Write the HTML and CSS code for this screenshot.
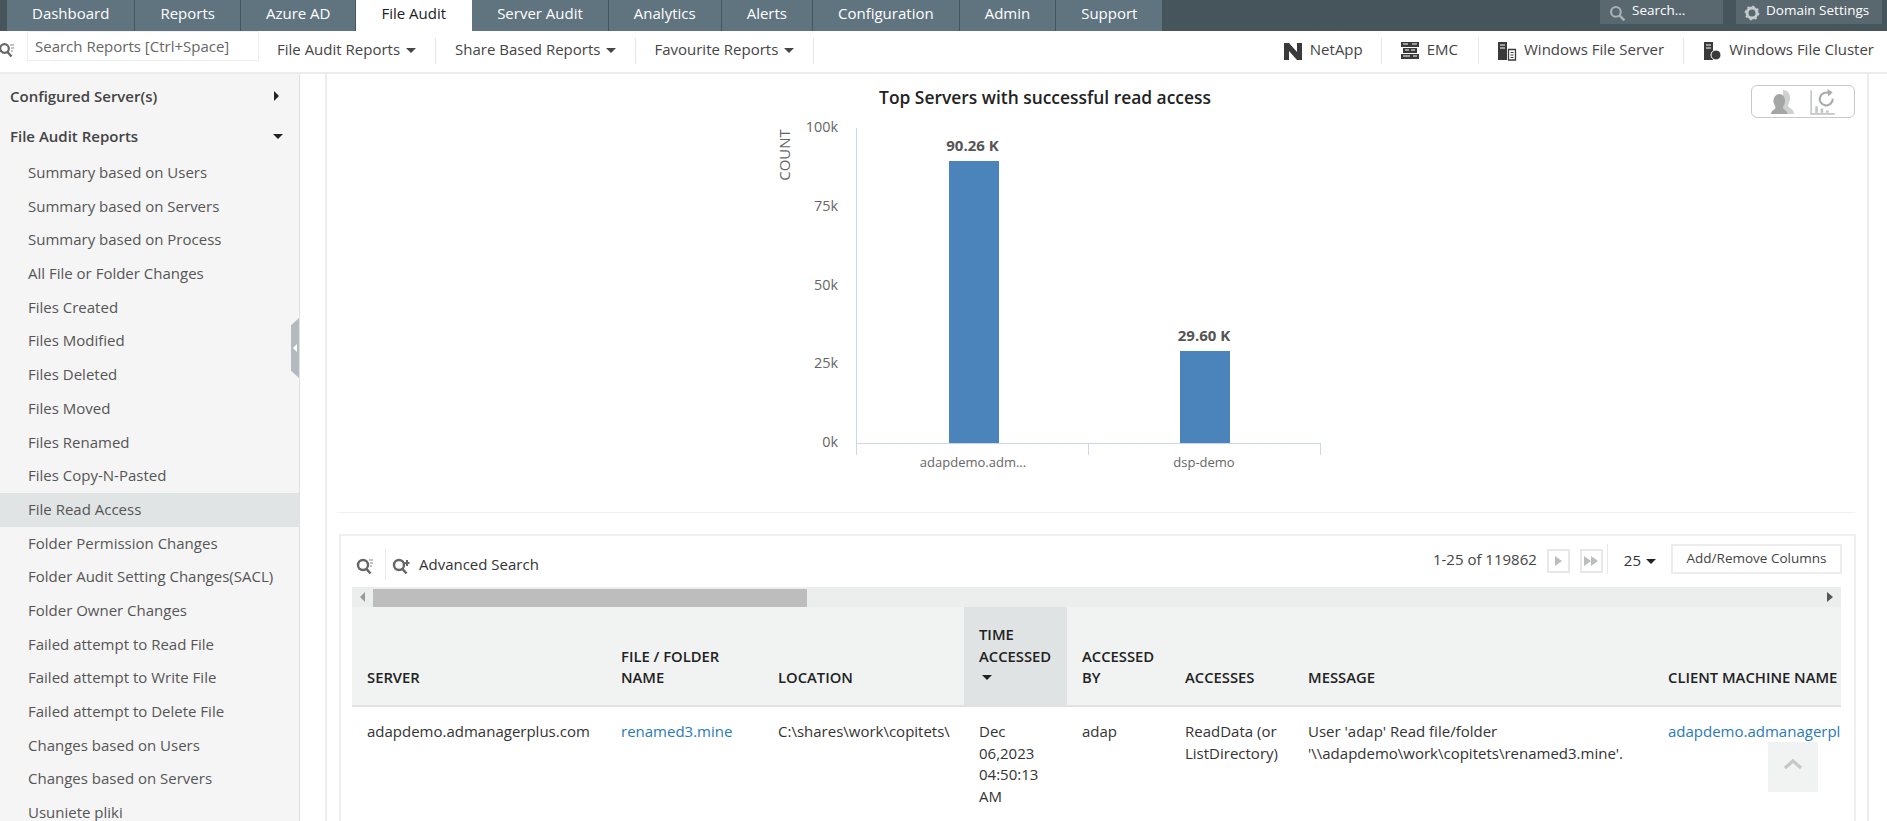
FILE: index.html
```html
<!DOCTYPE html>
<html lang="en">
<head>
<meta charset="utf-8">
<title>File Audit</title>
<link rel="stylesheet" href="styles.css">
</head>
<body>
<header class="topbar">
  <nav class="tabs">
    <a class="tab">Dashboard</a><a class="tab">Reports</a><a class="tab">Azure AD</a><a class="tab active">File Audit</a><a class="tab">Server Audit</a><a class="tab">Analytics</a><a class="tab">Alerts</a><a class="tab">Configuration</a><a class="tab">Admin</a><a class="tab">Support</a>
  </nav>
  <div class="top-tools">
    <div class="top-search">
      <svg class="top-icon" viewBox="0 0 16 16"><circle cx="6.500" cy="6.500" r="4.600" fill="none" stroke="#a9b1b5" stroke-width="2"/><path d="M10 10l4.500 4.500" stroke="#a9b1b5" stroke-width="2.400"/></svg>
      <span>Search...</span>
    </div>
    <div class="top-domain">
      <svg class="top-icon" viewBox="0 0 16 16"><circle cx="8" cy="8" r="5" fill="none" stroke="#c4c9cc" stroke-width="3"/><circle cx="8" cy="8" r="6.600" fill="none" stroke="#c4c9cc" stroke-width="1.600" stroke-dasharray="2.200 3"/></svg>
      <span>Domain Settings</span>
    </div>
  </div>
</header>

<div class="toolbar">
  <svg class="tool-search" viewBox="0 0 16 16"><circle cx="5.500" cy="6.500" r="4.300" fill="none" stroke="#666" stroke-width="2.200"/><path d="M8.500 10l4 4.500" stroke="#666" stroke-width="2.400"/><path d="M11 3h4M12 6h3M12 9h2" stroke="#888" stroke-width="1"/></svg>
  <div class="search-box">Search Reports [Ctrl+Space]</div>
  <div class="menu m1">File Audit Reports<i class="caret"></i></div>
  <div class="menu m2">Share Based Reports<i class="caret"></i></div>
  <div class="menu m3">Favourite Reports<i class="caret"></i></div>
  <div class="spacer"></div>
  <div class="kind k1">
    <svg class="kind-icon" viewBox="0 0 20 20"><path d="M1 2h5l8 9V2h5v17h-5L6 10v9H1z" fill="#3a3a3a"/></svg>NetApp
  </div>
  <div class="kind k2">
    <svg class="kind-icon" viewBox="0 0 20 20"><path d="M1 1h18v5H1zM3 7h14v5H3zM1 13h18v5H1z" fill="#3a3a3a"/><path d="M3 3h5M12 3h5M5 9h4M11 9h4M3 15h7M13 15h4" stroke="#fff" stroke-width="1.200"/></svg>EMC
  </div>
  <div class="kind k3">
    <svg class="kind-icon" viewBox="0 0 20 20"><path d="M1 1h9v18H1z" fill="#3a3a3a"/><path d="M3 4h5M3 7h5" stroke="#fff" stroke-width="1.200"/><path d="M11.500 8.500h7v10.500h-7z" fill="#fff" stroke="#3a3a3a" stroke-width="1.300"/><path d="M13.500 11.500h3M13.500 14h3M13.500 16.500h3" stroke="#3a3a3a"/></svg>Windows File Server
  </div>
  <div class="kind k4">
    <svg class="kind-icon" viewBox="0 0 20 20"><path d="M2 1h9v18H2z" fill="#3a3a3a"/><path d="M4 4h5M4 7h5" stroke="#fff" stroke-width="1.200"/><circle cx="14" cy="14" r="5" fill="#3a3a3a" stroke="#fff"/></svg>Windows File Cluster
  </div>
</div>

<div class="layout">
  <aside class="sidebar">
    <div class="side-head first">Configured Server(s)<i class="tri-right"></i></div>
    <div class="side-head">File Audit Reports<i class="tri-down"></i></div>
    <ul class="side-list">
      <li>Summary based on Users</li>
      <li>Summary based on Servers</li>
      <li>Summary based on Process</li>
      <li>All File or Folder Changes</li>
      <li>Files Created</li>
      <li>Files Modified</li>
      <li>Files Deleted</li>
      <li>Files Moved</li>
      <li>Files Renamed</li>
      <li>Files Copy-N-Pasted</li>
      <li class="current">File Read Access</li>
      <li>Folder Permission Changes</li>
      <li>Folder Audit Setting Changes(SACL)</li>
      <li>Folder Owner Changes</li>
      <li>Failed attempt to Read File</li>
      <li>Failed attempt to Write File</li>
      <li>Failed attempt to Delete File</li>
      <li>Changes based on Users</li>
      <li>Changes based on Servers</li>
      <li>Usuniete pliki</li>
    </ul>
    <div class="side-handle"><i></i></div>
  </aside>

  <main class="main">
    <section class="chart">
      <svg class="chart-svg" viewBox="337 74 1518 438">
        <text class="c-title" x="1045" y="104" text-anchor="middle">Top Servers with successful read access</text>
        <text class="c-axis-title" transform="translate(790 155) rotate(-90)" text-anchor="middle">COUNT</text>
        <g class="c-tick" text-anchor="end">
          <text x="838" y="132">100k</text>
          <text x="838" y="211">75k</text>
          <text x="838" y="290">50k</text>
          <text x="838" y="368">25k</text>
          <text x="838" y="447">0k</text>
        </g>
        <path d="M856.500 128V455M856 443.500H1321M1088.500 443V455M1320.500 443V455" stroke="#ccd6eb" stroke-width="1" fill="none"/>
        <rect x="949" y="161" width="50" height="282" fill="#4b83bb"/>
        <rect x="1180" y="351" width="50" height="92" fill="#4b83bb"/>
        <text class="c-data" x="972.500" y="151" text-anchor="middle">90.26 K</text>
        <text class="c-data" x="1204" y="341" text-anchor="middle">29.60 K</text>
        <text class="c-cat" x="973" y="467" text-anchor="middle">adapdemo.adm...</text>
        <text class="c-cat" x="1204" y="467" text-anchor="middle">dsp-demo</text>
      </svg>
      <div class="chart-btns">
        <svg class="cb-users" viewBox="0 0 26 26"><path d="M13 1c4.500 0 7.500 3.500 7 9-.3 3-2 5-2 6.500 0 2.500 6 3 6 8.500H13V1z" fill="#cfd1d1"/><path d="M9.500 5c3.500 0 6 3.500 5.500 8-.3 2.500-2 4.500-2 5.500 0 2.500 4.500 2.500 4.500 6.500H1c0-4 4.500-4 4.500-6.500 0-1-1.500-3-2-5.500C3 8.500 6 5 9.500 5z" fill="#a4a6a6"/></svg>
        <svg class="cb-chart" viewBox="0 0 26 26"><path d="M2 2v22h22" fill="none" stroke="#c4c6c6" stroke-width="1.500"/><path d="M7 23v-6M12 23v-4M17 23v-2" stroke="#c4c6c6" stroke-width="2.500"/><path d="M22 10a6 6 0 1 1-3-5" fill="none" stroke="#a9abab" stroke-width="2"/><path d="M17 1l5 3-4 4z" fill="#a9abab"/></svg>
      </div>
    </section>

    <section class="report">
      <div class="report-bar">
        <svg class="rb-icon" viewBox="0 0 18 18"><circle cx="7" cy="8" r="5" fill="none" stroke="#666" stroke-width="2.400"/><path d="M10.500 12l4 4.500" stroke="#666" stroke-width="2.600"/><path d="M13 3h4M14 6h3M14 9h2" stroke="#888" stroke-width="1"/></svg>
        <span class="rb-sep"></span>
        <svg class="rb-icon" viewBox="0 0 18 18"><circle cx="7" cy="8" r="5" fill="none" stroke="#666" stroke-width="2.400"/><path d="M10.500 12l4 4.500" stroke="#666" stroke-width="2.600"/><path d="M15 3v6M12.500 6h5" stroke="#666" stroke-width="2"/></svg>
        <span class="adv">Advanced Search</span>
        <span class="spacer"></span>
        <span class="range">1-25 of 119862</span>
        <span class="pg"><i class="pg-tri"></i></span>
        <span class="pg pg2"><i class="pg-tri"></i><i class="pg-tri"></i></span>
        <span class="rb-sep r"></span>
        <span class="size">25<i class="caret dark"></i></span>
        <span class="cols">Add/Remove Columns</span>
      </div>
      <div class="table-wrap">
        <div class="hscroll">
          <i class="sc-left"></i>
          <div class="thumb"></div>
          <i class="sc-right"></i>
        </div>
        <table class="grid">
          <colgroup>
            <col class="c1"><col class="c2"><col class="c3"><col class="c4"><col class="c5"><col class="c6"><col class="c7"><col class="c8">
          </colgroup>
          <thead>
            <tr>
              <th>SERVER</th>
              <th>FILE / FOLDER NAME</th>
              <th>LOCATION</th>
              <th class="sorted">TIME ACCESSED<br><i class="caret dark sort"></i></th>
              <th>ACCESSED BY</th>
              <th>ACCESSES</th>
              <th>MESSAGE</th>
              <th class="nowrap">CLIENT MACHINE NAME</th>
            </tr>
          </thead>
          <tbody>
            <tr>
              <td>adapdemo.admanagerplus.com</td>
              <td><a>renamed3.mine</a></td>
              <td>C:\shares\work\copitets\</td>
              <td>Dec 06,2023 04:50:13 AM</td>
              <td>adap</td>
              <td>ReadData (or ListDirectory)</td>
              <td>User 'adap' Read file/folder '\\adapdemo\work\copitets\renamed3.mine'.</td>
              <td class="nowrap"><a>adapdemo.admanagerplus.com</a></td>
            </tr>
          </tbody>
        </table>
      </div>
    </section>
    <div class="to-top"><svg viewBox="0 0 20 12"><path d="M2 10l8-7 8 7" fill="none" stroke="#c4c8c8" stroke-width="3.200"/></svg></div>
  </main>
</div>
</body>
</html>
```
FILE: styles.css
```css
* { box-sizing: border-box; }
html, body { margin: 0; height: 821px; overflow: hidden; }
body { font-family: "Open Sans", "Liberation Sans", sans-serif; font-size: 15px; color: #333; background: #fff; }

.topbar { height: 31px; background: #46545c; display: flex; justify-content: space-between; padding-left: 7px; }
.tabs { display: flex; }
.tab { padding: 0 25px; line-height: 27px; height: 31px; background: #607480; color: #fff; border-right: 1px solid #46545c; white-space: nowrap; font-size: 15px; text-align: center; }
.tab.active { background: #fff; color: #222; border-right-color: #fff; }

.top-tools { display: flex; gap: 13px; padding-right: 5px; align-items: flex-start; }
.top-search, .top-domain { height: 24px; background: #59676f; color: #fff; display: flex; align-items: center; font-size: 13.5px; padding-bottom: 4px; }
.top-search { width: 123px; padding-left: 9px; gap: 6px; }
.top-domain { width: 146px; padding-left: 8px; gap: 6px; }
.top-icon { width: 17px; height: 17px; margin-top: 7px; flex: none; }
.top-domain .top-icon { margin-top: 6px; width: 16px; height: 16px; }

.toolbar { height: 43px; border-bottom: 2px solid #ececec; display: flex; align-items: flex-start; background: #fff; }
.tool-search { width: 16px; height: 16px; margin: 11px 0 0 -1px; flex: none; }
.search-box { width: 232px; height: 30px; margin: 0 0 0 12px; border: 1px solid #eceeee; border-top-color: #f2f2f2; padding-left: 7px; line-height: 28px; color: #666; font-size: 15px; white-space: nowrap; }
.menu { height: 26px; margin-top: 7px; padding: 0 19px; line-height: 23px; border-right: 1px solid #e6e6e6; color: #444; white-space: nowrap; font-size: 15px; }
.menu.m1 { margin-left: -1px; padding-left: 19px; }
.menu.m3 { padding-left: 18px; }
.caret { display: inline-block; width: 0; height: 0; margin-left: 6px; vertical-align: 2px; border: 5px solid transparent; border-top-color: #444; border-bottom-width: 0; }
.caret.dark { border-top-color: #222; }
.spacer { flex: 1; }
.kind { height: 26px; margin-top: 7px; display: flex; align-items: center; color: #444; white-space: nowrap; font-size: 15px; padding-bottom: 4px; border-right: 1px solid #e6e6e6; }
.kind-icon { width: 20px; height: 20px; margin-right: 7px; flex: none; margin-top: 4px; }
.k1 { padding-right: 18px; }
.k2 { padding: 0 20px 4px 18px; }
.k3 { padding: 0 19px 4px 18px; }
.k4 { padding: 0 13px 4px 18px; border-right: 0; }

.layout { display: flex; height: 747px; overflow: hidden; }
.sidebar { width: 300px; flex: none; background: #f5f5f5; border-right: 1px solid #e0e0e0; position: relative; }
.side-head { display: flex; justify-content: space-between; align-items: center; padding: 0 16px 0 10px; height: 40px; font-weight: 600; color: #444; font-size: 15px; }
.side-head.first { margin-top: 2px; }
.tri-right { width: 0; height: 0; border: 5px solid transparent; border-left-color: #222; border-right-width: 0; margin-right: 4px; }
.tri-down { width: 0; height: 0; border: 5.500px solid transparent; border-top-color: #222; border-bottom-width: 0; }
.side-list { list-style: none; margin: 0; padding: 0; }
.side-list li { height: 33.7px; line-height: 33.7px; padding-left: 28px; color: #555; white-space: nowrap; font-size: 15px; }
.side-list li.current { background: #e1e4e4; }
.side-handle { position: absolute; left: 291px; top: 244px; width: 8px; height: 60px; background: #b4babd; clip-path: polygon(100% 0, 100% 100%, 0 88%, 0 12%); display: flex; align-items: center; }
.side-handle i { width: 0; height: 0; border: 4px solid transparent; border-right-color: #fff; border-left-width: 0; margin-left: 2px; }

.main { margin-left: 25px; width: 1544px; flex: none; border-left: 2px solid #ececec; border-right: 2px solid #ececec; position: relative; padding: 0 12px 0 10px; }
.chart { height: 439px; border-bottom: 1px solid #f0f0f0; position: relative; }
.chart-svg { display: block; width: 1518px; height: 438px; }
.chart-svg text { font-family: "Open Sans", "Liberation Sans", sans-serif; }
.c-title { font-size: 17.400px; font-weight: 600; fill: #222; }
.c-axis-title { font-size: 15px; fill: #666; }
.c-tick { font-size: 14.400px; fill: #666; }
.c-data { font-size: 15px; font-weight: 700; fill: #555; }
.c-cat { font-size: 13px; fill: #666; }
.chart-btns { position: absolute; top: 11px; right: 0; width: 104px; height: 33px; border: 1px solid #c9c9c9; border-radius: 6px; display: flex; align-items: center; padding-left: 18px; gap: 13px; }
.cb-users { width: 26px; height: 26px; }
.cb-chart { width: 28px; height: 28px; }

.report { margin: 21px 0 0 2px; border: 2px solid #efefef; border-bottom: 0; width: 1517px; padding: 0 12px 0 11px; height: 400px; }
.report-bar { height: 51px; display: flex; align-items: flex-start; }
.rb-icon { width: 18px; height: 18px; margin-top: 21px; flex: none; }
.report-bar > .rb-icon:first-child { margin-left: 4px; }
.rb-sep { width: 1px; height: 31px; background: #e8e8e8; margin: 13px 6px 0 11px; flex: none; }
.rb-sep.r { height: 30px; margin: 8px 16px 0 4px; }
.adv { margin: 18px 0 0 9px; color: #333; font-size: 15px; line-height: 21px; }
.range { margin-top: 13px; line-height: 21px; color: #444; font-size: 15px; }
.pg { width: 23px; height: 24px; border: 2px solid #e8e8e8; margin: 13px 0 0 10px; display: flex; align-items: center; justify-content: center; }
.pg-tri { width: 0; height: 0; border: 5px solid transparent; border-left: 7px solid #b9bdbd; border-right-width: 0; }
.pg2 .pg-tri:last-child { margin-left: 0; }
.size { margin-top: 14px; line-height: 21px; color: #333; font-size: 15px; white-space: nowrap; }
.size .caret { margin-left: 5px; border-width: 5px; border-bottom-width: 0; }
.cols { width: 171px; height: 30px; margin: 8px 0 0 15px; border: 2px solid #ececec; text-align: center; line-height: 25px; color: #444; font-size: 13.5px; white-space: nowrap; }

.table-wrap { width: 1489px; overflow: hidden; position: relative; }
.hscroll { height: 20px; background: #eceeee; position: relative; display: flex; align-items: center; }
.thumb { position: absolute; left: 21px; top: 2px; width: 434px; height: 18px; background: #bdbdbd; }
.sc-left { width: 0; height: 0; border: 5px solid transparent; border-right: 5px solid #999; border-left-width: 0; margin-left: 8px; }
.sc-right { width: 0; height: 0; border: 5px solid transparent; border-left: 6px solid #555; border-right-width: 0; position: absolute; right: 8px; top: 5px; }
.grid { border-collapse: collapse; table-layout: fixed; width: 1600px; }
.c1 { width: 254px; } .c2 { width: 157px; } .c3 { width: 201px; } .c4 { width: 103px; }
.c5 { width: 103px; } .c6 { width: 123px; } .c7 { width: 360px; } .c8 { width: 300px; }
.grid th { height: 99px; background: #f1f3f3; border-bottom: 2px solid #e0e2e2; vertical-align: bottom; text-align: left; padding: 0 15px 16px; font-weight: 600; font-size: 14.800px; line-height: 21.700px; color: #222; }
.grid th.sorted { background: #dfe3e3; }
.grid td { vertical-align: top; padding: 14px 15px 0; font-size: 15px; line-height: 21.700px; color: #333; }
.grid td a { color: #2a7ab8; }
.nowrap { white-space: nowrap; overflow: hidden; }
.sort { vertical-align: 3px; margin-left: 3px; }

.to-top { position: absolute; left: 1441px; top: 668px; width: 50px; height: 50px; background: #f1f3f3; display: flex; justify-content: center; padding-top: 16px; }
.to-top svg { width: 20px; height: 12px; }
```
